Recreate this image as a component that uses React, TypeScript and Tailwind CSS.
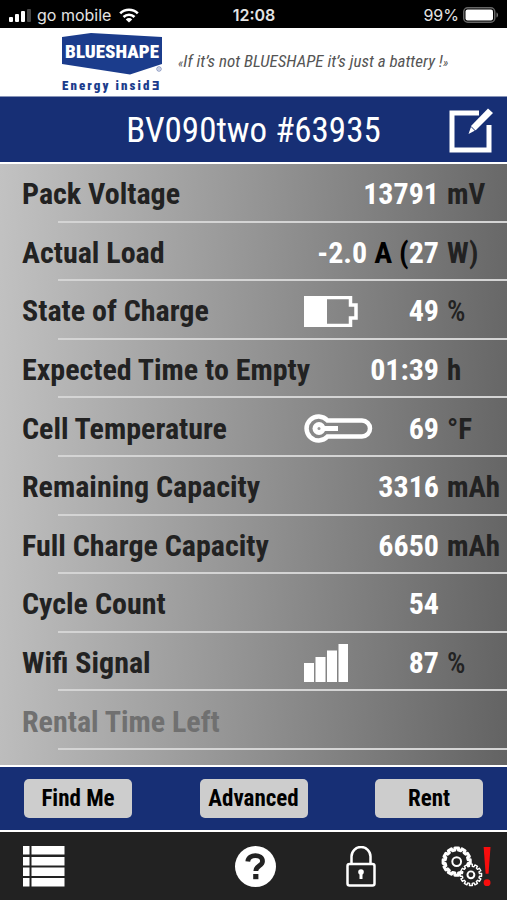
import type { ReactNode } from 'react';

const condensed = "font-['Roboto_Condensed','Roboto',sans-serif]";

function StatusBar() {
  return (
    <div className="grid h-7 grid-cols-[1fr_auto_1fr] items-center bg-black pr-2 pl-[9px] pt-[2px] font-['Inter',sans-serif] text-[16px] leading-6 text-[#e4e4e4]">
      <div className="flex items-center gap-[5px]">
        <svg width="23" height="13" viewBox="0 0 23 13" aria-hidden="true">
          <rect x="0" y="8" width="4" height="5" rx="1" fill="#fff" />
          <rect x="6" y="5" width="4" height="8" rx="1" fill="#fff" />
          <rect x="12" y="2" width="4" height="11" rx="1" fill="#fff" />
          <rect x="18" y="0" width="4" height="13" rx="1" fill="#444" />
        </svg>
        <span>go mobile</span>
        <svg className="ml-[3px]" width="20" height="15" viewBox="0 0 20 15" fill="none" stroke="#fff" strokeWidth="2.6" aria-hidden="true">
          <path d="M1.2 5.4a12.4 12.4 0 0 1 17.6 0" />
          <path d="M4.5 9a7.8 7.8 0 0 1 11 0" />
          <path d="M10 14.6 6.8 11.4a4.6 4.6 0 0 1 6.4 0Z" fill="#fff" stroke="none" />
        </svg>
      </div>
      <span className="font-semibold">12:08</span>
      <div className="flex items-center justify-end gap-1">
        <span>99%</span>
        <svg width="36" height="16" viewBox="0 0 36 16" aria-hidden="true">
          <rect x="0.75" y="0.75" width="31" height="14.5" rx="4" fill="none" stroke="#666" strokeWidth="1.5" />
          <rect x="2.5" y="2.5" width="27.5" height="11" rx="2" fill="#fff" />
          <path d="M33.5 5.5c2 .6 2 4.4 0 5Z" fill="#777" />
        </svg>
      </div>
    </div>
  );
}

function Brand() {
  return (
    <div className="flex h-[68px] items-center bg-white pl-[60px]">
      <svg className="shrink-0" width="104" height="62" viewBox="0 0 104 62" role="img" aria-label="Blueshape">
        <path d="M2 6 31 2 102 6V33L70 43.500 2 33Z" fill="#1b3c8c" />
        <text x="52" y="27" textAnchor="middle" fill="#fff" className="font-['Roboto_Condensed','Roboto',sans-serif] text-[19px] font-black">BLUESHAPE</text>
        <circle cx="99" cy="38" r="2.200" fill="none" stroke="#7d8dbb" strokeWidth="1" />
        <circle cx="99" cy="38" r="0.800" fill="#7d8dbb" />
        <text x="2" y="59" fill="#1b3c8c" className="font-['Roboto_Condensed','Roboto',sans-serif] text-[13px] font-black tracking-[0.16em]">
          Energy insid<tspan className="font-['DejaVu_Sans_Condensed','DejaVu_Sans',sans-serif] tracking-normal">Ǝ</tspan>
        </text>
      </svg>
      <p className={`${condensed} ml-[14px] text-[17px] leading-6 whitespace-nowrap text-[#555] italic`}>
        <span className="text-[13px]">«</span>If it’s not BLUESHAPE it’s just a battery !<span className="text-[13px]">»</span>
      </p>
    </div>
  );
}

function EditIcon() {
  return (
    <svg width="46" height="46" viewBox="0 0 46 46" aria-hidden="true">
      <path d="M31 5H4V42H41V17" fill="none" stroke="#fff" strokeWidth="5" />
      <path d="M40 0.500 45 5 28 22 20.500 26 23.500 17.500Z" fill="#fff" />
      <path d="m23 18.500 4.500 4.500" stroke="#172f75" strokeWidth="1" />
    </svg>
  );
}

function ChargeIcon() {
  return (
    <svg width="54" height="31" viewBox="0 0 54 31" aria-hidden="true">
      <path d="M1.500 1.500H46.500V9H52V22H46.500V29.500H1.500Z" fill="none" stroke="#fff" strokeWidth="3.500" />
      <rect x="0" y="1" width="23" height="29" fill="#fff" />
    </svg>
  );
}

function ThermometerIcon() {
  return (
    <svg width="69" height="31" viewBox="0 0 69 31" aria-hidden="true">
      <path d="M23.500 7.500H58A8 8 0 0 1 58 23.500H23.500A12 12 0 1 1 23.500 7.500Z" fill="none" stroke="#fff" strokeWidth="4.500" />
      <circle cx="15" cy="15.500" r="6.500" fill="#fff" />
      <rect x="15" y="13" width="19" height="5" fill="#fff" />
      <circle cx="15" cy="15.500" r="1.500" fill="#999" />
    </svg>
  );
}

function WifiIcon() {
  return (
    <svg width="45" height="38" viewBox="0 0 45 38" fill="#fff" aria-hidden="true">
      <rect x="0" y="19" width="10" height="19" />
      <rect x="11.500" y="13" width="10" height="25" />
      <rect x="23" y="6.500" width="10" height="31.500" />
      <rect x="34.500" y="0" width="9.500" height="38" />
    </svg>
  );
}

type Reading = { label: string; value?: ReactNode; unit?: ReactNode; icon?: ReactNode; muted?: boolean };

const percent = <span className="font-medium">%</span>;

const readings: Reading[] = [
  { label: 'Pack Voltage', value: '13791', unit: 'mV' },
  { label: 'Actual Load', value: <>-2.0 <span className="text-black">A (</span>27</>, unit: 'W)' },
  { label: 'State of Charge', value: '49', unit: percent, icon: <ChargeIcon /> },
  { label: 'Expected Time to Empty', value: '01:39', unit: 'h' },
  { label: 'Cell Temperature', value: '69', unit: '°F', icon: <ThermometerIcon /> },
  { label: 'Remaining Capacity', value: '3316', unit: 'mAh' },
  { label: 'Full Charge Capacity', value: '6650', unit: 'mAh' },
  { label: 'Cycle Count', value: '54' },
  { label: 'Wifi Signal', value: '87', unit: percent, icon: <WifiIcon /> },
  { label: 'Rental Time Left', muted: true },
];

function ReadingRow({ label, value, unit, icon, muted }: Reading) {
  return (
    <div className="flex flex-1 flex-col">
      <div className="flex flex-1 items-center pt-1 pl-[22px] text-[30px] leading-[42px] font-bold whitespace-nowrap">
        <dt className={muted ? 'flex-1 text-[#707070]' : 'flex-1 text-[#222]'}>{label}</dt>
        <dd className="flex items-center">
          {icon ? (
            <span className="flex w-[135px] items-center justify-between text-white">
              {icon}
              <span>{value}</span>
            </span>
          ) : (
            <span className="text-white">{value}</span>
          )}
          <span className="ml-2 w-[60px] text-[29px] text-[#222]">{unit}</span>
        </dd>
      </div>
      <div className="ml-[58px] h-[2px] bg-[#d4d4d4]" />
    </div>
  );
}

function Gear({ cx, cy, r, teeth, width }: { cx: number; cy: number; r: number; teeth: number; width: number }) {
  const points: string[] = [];
  for (let i = 0; i < teeth; i++) {
    const step = (Math.PI * 2) / teeth;
    [[-0.26, r], [0.26, r], [0.3, r - 2.2], [0.7, r - 2.2]].forEach(([f, d]) => {
      const a = (i + f) * step;
      points.push(`${(cx + d * Math.cos(a)).toFixed(2)},${(cy + d * Math.sin(a)).toFixed(2)}`);
    });
  }
  return (
    <g fill="#222" stroke="#fff" strokeWidth={width} strokeLinejoin="round">
      <polygon points={points.join(' ')} />
      <circle cx={cx} cy={cy} r={r * 0.32} strokeWidth={2} />
    </g>
  );
}

const navButton = 'flex w-[50px] justify-center';

function NavBar() {
  return (
    <nav className="flex h-[68px] items-center justify-between bg-[#222] pr-[16px] pl-[19px]">
      <button type="button" aria-label="List" className={navButton}>
        <svg className="shrink-0" width="42" height="41" viewBox="0 0 42 41" fill="#fff" aria-hidden="true">
          {[0, 11, 21.5, 32].map((y) => (
            <g key={y}>
              <rect x="0" y={y} width="6.500" height="8.500" />
              <rect x="8.500" y={y} width="33" height="8.500" />
            </g>
          ))}
        </svg>
      </button>
      <span className={navButton} />
      <button type="button" aria-label="Help" className={navButton}>
        <svg className="shrink-0" width="41" height="41" viewBox="0 0 41 41" aria-hidden="true">
          <circle cx="20.500" cy="20.500" r="20.500" fill="#fff" />
          <path d="M12.800 15.500C13.500 7.500 27.500 8 27.500 15.200 27.500 20 20.800 19.500 20.800 25" fill="none" stroke="#222" strokeWidth="4.800" />
          <rect x="18.200" y="28" width="5.200" height="5.200" fill="#222" />
        </svg>
      </button>
      <button type="button" aria-label="Lock" className={navButton}>
        <svg className="shrink-0" width="30" height="41" viewBox="0 0 30 41" fill="none" stroke="#fff" aria-hidden="true">
          <rect x="1.500" y="18" width="27" height="21.500" rx="2" strokeWidth="2.500" />
          <path d="M5.500 18V10.500a9.500 9.500 0 0 1 19 0V18" strokeWidth="2.500" />
          <circle cx="15" cy="26" r="2.800" fill="#fff" stroke="none" />
          <path d="M15 26v7" strokeWidth="3" />
        </svg>
      </button>
      <button type="button" aria-label="Settings" className={navButton}>
        <svg className="shrink-0" width="50" height="41" viewBox="0 0 51 41" aria-hidden="true">
          <Gear cx={16} cy={15.5} r={14} teeth={12} width={3} />
          <Gear cx={30.5} cy={29} r={11} teeth={12} width={1.4} />
          <path d="M43.500 0.500H50.500L48.500 28H45.500Z" fill="#f80d0d" />
          <circle cx="47" cy="37" r="3.500" fill="#f80d0d" />
        </svg>
      </button>
    </nav>
  );
}

export default function App() {
  return (
    <div className={`flex min-h-screen flex-col ${condensed}`}>
      <StatusBar />
      <Brand />
      <header className="grid h-[68px] grid-cols-[46px_1fr_46px] items-center border-t border-b-2 border-t-[#8794b8] border-b-white bg-[#172f75] px-[13px] pt-[2px]">
        <h1 className="col-start-2 text-center text-[35px] leading-10 whitespace-nowrap text-white">BV090two #63935</h1>
        <button type="button" aria-label="Edit name"><EditIcon /></button>
      </header>
      <main className="flex flex-1 flex-col bg-[linear-gradient(93deg,#c2c2c2_0%,#939393_50%,#636363_100%)] pb-[15px]">
        <dl className="flex flex-1 flex-col">
          {readings.map((r) => <ReadingRow key={r.label} {...r} />)}
        </dl>
      </main>
      <div className="flex h-[67px] items-center justify-between border-y-2 border-white bg-[#172f75] px-6">
        {['Find Me', 'Advanced', 'Rent'].map((name) => (
          <button key={name} type="button" className="h-[39px] w-[108px] rounded-[5px] bg-[#cdcdcd] text-[23px] leading-8 font-bold text-black">
            {name}
          </button>
        ))}
      </div>
      <NavBar />
    </div>
  );
}
